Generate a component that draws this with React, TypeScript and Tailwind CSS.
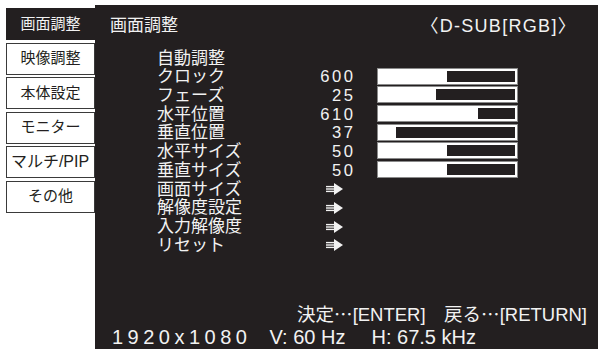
import React from "react";

const FONT = { fontFamily: '"Liberation Sans", "Noto Sans CJK JP", sans-serif' };
const CJK = { fontFamily: '"Noto Sans CJK JP", sans-serif' };

const tabs = ["画面調整", "映像調整", "本体設定", "モニター", "マルチ/PIP", "その他"];

type Row = { label: string; value?: string; pct?: number; arrow?: boolean };
const rows: Row[] = [
  { label: "自動調整" },
  { label: "クロック", value: "600", pct: 50 },
  { label: "フェーズ", value: "25", pct: 42 },
  { label: "水平位置", value: "610", pct: 73 },
  { label: "垂直位置", value: "37", pct: 13 },
  { label: "水平サイズ", value: "50", pct: 50 },
  { label: "垂直サイズ", value: "50", pct: 50 },
  { label: "画面サイズ", arrow: true },
  { label: "解像度設定", arrow: true },
  { label: "入力解像度", arrow: true },
  { label: "リセット", arrow: true },
];

function Arrow() {
  return (
    <svg width="17" height="12" viewBox="0 0 17 12" className="block">
      <rect x="0" y="2.9" width="9" height="1.4" fill="#f2f2f2" />
      <rect x="0" y="5.3" width="9" height="1.4" fill="#f2f2f2" />
      <rect x="0" y="7.7" width="9" height="1.4" fill="#f2f2f2" />
      <polygon points="8,0 17,6 8,12" fill="#f2f2f2" />
    </svg>
  );
}

function Bar({ pct }: { pct: number }) {
  return (
    <div className="flex h-[17px] w-[141px] border border-[#8a8a8a] bg-white p-[2px] pl-0">
      <div style={{ width: `${pct}%` }} />
      <div className="flex-1 bg-[#231f20]" />
    </div>
  );
}

export default function App() {
  return (
    <div className="flex h-[349px] w-[598px] overflow-hidden bg-white" style={FONT}>
      <div className="flex w-[95px] shrink-0 flex-col pt-[8px] pl-[6px]">
        {tabs.map((t, i) => (
          <div
            key={t}
            className={
              i === 0
                ? "mb-[2.5px] flex h-[32px] items-center justify-center bg-[#231f20] text-[15px] text-[#f2f2f2]"
                : "mb-[2.5px] flex h-[32px] items-center justify-center whitespace-nowrap border border-[#3a3a3a] bg-white text-[15px] text-[#231f20]"
            }
          >
            <span className={i === 4 ? "-ml-[1px] text-[16px]" : ""}>{t}</span>
          </div>
        ))}
      </div>
      <div className="mt-[5px] flex flex-1 flex-col bg-[#231f20] text-[#f2f2f2]">
        <div className="mt-[9px] flex h-[24px] items-center justify-between pl-[15px] pr-[21px]">
          <span className="text-[17px]">画面調整</span>
          <span className="text-[18px] tracking-[1.3px]">〈D-SUB[RGB]〉</span>
        </div>
        <div className="mt-[10px] grid grid-cols-[150px_46px_24px_141px] pl-[62px]">
          {rows.map((r) => (
            <React.Fragment key={r.label}>
              <div className="flex h-[18.7px] items-end whitespace-nowrap text-[17px] leading-[16px]">
                {r.label}
              </div>
              {r.arrow ? (
                <div className="flex h-[18.7px] items-center pt-[2px] pl-[19px]">
                  <Arrow />
                </div>
              ) : (
                <div className="-mr-[2.5px] flex h-[18.7px] items-end justify-end text-[16.6px] leading-[16px] tracking-[2.5px]">
                  {r.value ?? ""}
                </div>
              )}
              <div className="h-[18.7px]" />
              <div className="flex h-[18.7px] items-center">
                {r.pct !== undefined ? <Bar pct={r.pct} /> : null}
              </div>
            </React.Fragment>
          ))}
        </div>
        <div className="flex-1" />
        <div className="h-[24px] whitespace-nowrap pr-[11px] text-right text-[18.5px] leading-[24px]">
          決定<span style={CJK}>…</span>[ENTER]　戻る<span style={CJK}>…</span>[RETURN]
        </div>
        <div className="h-[24px] whitespace-nowrap pl-[17px] text-[20px] leading-[24px]">
          <span className="tracking-[4.5px]">1920x1080</span>
          <span className="ml-[18px]">V: 60 Hz</span>
          <span className="ml-[26px]">H: 67.5 kHz</span>
        </div>
      </div>
    </div>
  );
}
